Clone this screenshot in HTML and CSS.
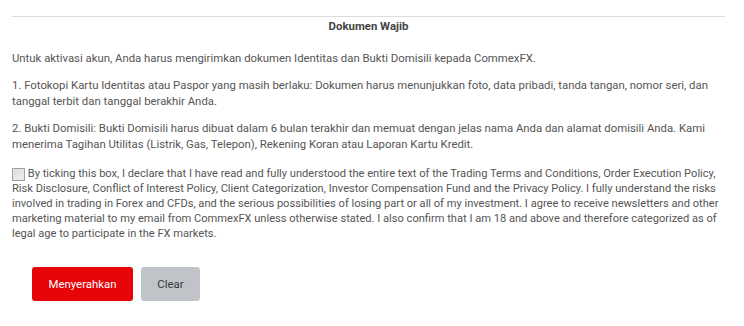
FILE: index.html
```
<!DOCTYPE html>
<html>
<head>
<meta charset="utf-8">
<link rel="stylesheet" href="styles.css">
</head>
<body>
<div class="doc">
  <div class="rule"></div>
  <h3 class="title">Dokumen Wajib</h3>
  <p class="para">Untuk aktivasi akun, Anda harus mengirimkan dokumen Identitas dan Bukti Domisili kepada CommexFX.</p>
  <p class="para">1. Fotokopi Kartu Identitas atau Paspor yang masih berlaku: Dokumen harus menunjukkan foto, data pribadi, tanda tangan, nomor seri, dan tanggal terbit dan tanggal berakhir Anda.</p>
  <p class="para">2. Bukti Domisili: Bukti Domisili harus dibuat dalam 6 bulan terakhir dan memuat dengan jelas nama Anda dan alamat domisili Anda. Kami menerima Tagihan Utilitas (Listrik, Gas, Telepon), Rekening Koran atau Laporan Kartu Kredit.</p>
  <p class="para agree"><span class="check"></span> By ticking this box, I declare that I have read and fully understood the entire text of the Trading Terms and Conditions, Order Execution Policy, Risk Disclosure, Conflict of Interest Policy, Client Categorization, Investor Compensation Fund and the Privacy Policy. I fully understand the risks involved in trading in Forex and CFDs, and the serious possibilities of losing part or all of my investment. I agree to receive newsletters and other marketing material to my email from CommexFX unless otherwise stated. I also confirm that I am 18 and above and therefore categorized as of legal age to participate in the FX markets.</p>
  <div class="actions">
    <button class="btn btn-submit">Menyerahkan</button>
    <button class="btn btn-clear">Clear</button>
  </div>
</div>
</body>
</html>
```
FILE: styles.css
```
html, body {
  margin: 0;
  padding: 0;
  background: #fff;
}
body {
  font-family: Roboto, "Liberation Sans", sans-serif;
  font-size: 11.35px;
  color: #555;
}
.doc {
  width: 713px;
  margin-left: 12px;
  padding-top: 16px;
}
.rule {
  height: 0;
  border-top: 1px solid #dcdde2;
}
.title {
  margin: 0;
  padding-top: 1px;
  text-align: center;
  font-size: 11.4px;
  font-weight: bold;
  color: #444;
  line-height: 16px;
}
.para {
  margin: 0 0 11px;
  line-height: 16px;
}
.title + .para {
  margin-top: 16px;
}
.agree {
  margin-top: 14px;
  font-size: 11.1px;
  line-height: 15px;
}
.check {
  display: inline-block;
  box-sizing: border-box;
  width: 13px;
  height: 13px;
  vertical-align: top;
  margin-top: 2px;
  border: 1px solid #a0a0a0;
  background: linear-gradient(135deg, #d8d8d8, #f4f4f4);
  box-shadow: inset 0 0 0 1px #e6e6e6;
}
.actions {
  display: flex;
  gap: 8px;
  margin-top: 26px;
  margin-left: 20px;
}
.btn {
  border: none;
  border-radius: 3px;
  height: 34px;
  font-family: Roboto, "Liberation Sans", sans-serif;
  font-size: 11.4px;
  padding: 0;
}
.btn-submit {
  width: 101px;
  background: #e60508;
  color: #fff;
}
.btn-clear {
  width: 59px;
  background: #c0c3c7;
  color: #343a40;
}
```
